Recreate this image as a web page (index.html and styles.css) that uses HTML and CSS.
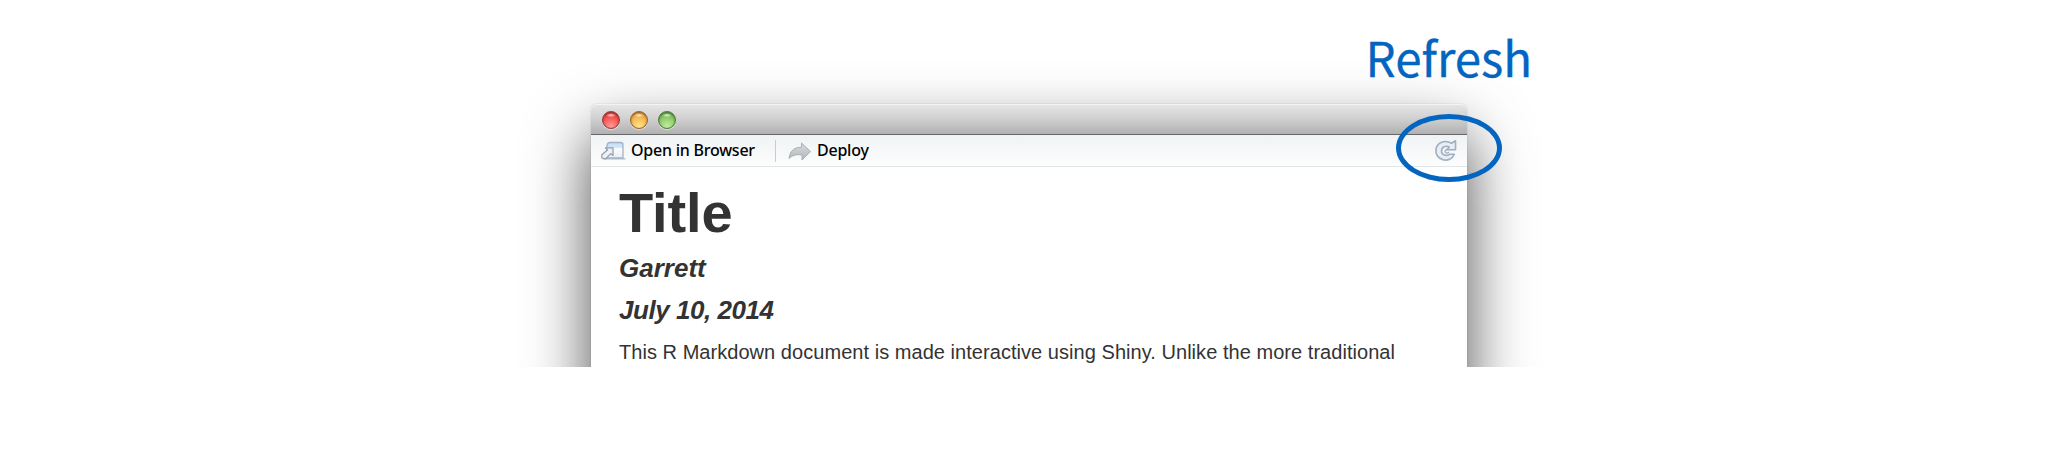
FILE: index.html
```html
<!DOCTYPE html>
<html lang="en">
<head>
<meta charset="utf-8">
<title>Title</title>
<link rel="stylesheet" href="styles.css">
</head>
<body>
<main class="figure">
  <section class="window">
    <header class="titlebar">
      <span class="light red"></span><span class="light amber"></span><span class="light green"></span>
    </header>
    <nav class="toolbar">
      <svg class="icon-open" viewBox="0 0 26 20" width="26" height="20">
        <defs><linearGradient id="pane" x1="0" y1="0" x2="0" y2="1"><stop offset="0" stop-color="#c5dff6"/><stop offset=".3" stop-color="#cfe4f7"/><stop offset=".4" stop-color="#fafcfe"/><stop offset="1" stop-color="#e9edf5"/></linearGradient></defs>
        <path d="M3 17.800H25.500" stroke="#c3c9d0" stroke-width="1.600"/>
        <path d="M7 4.500Q7.300 1.500 10 1.500H20.500Q23 1.500 23 4V17H7Z" fill="url(#pane)" stroke="#a3b1c6" stroke-width="1.300"/>
        <path d="M5.500 6.800H13V14.500L10.800 12.600L5.600 17.800L1.800 17V13.800L7.500 9Z" fill="#edf0f4" stroke="#929dab" stroke-width="1.200" stroke-linejoin="round"/>
      </svg>
      <span class="label open">Open in Browser</span>
      <i class="divider"></i>
      <svg class="icon-deploy" viewBox="0 0 24 20" width="24" height="20">
        <defs><linearGradient id="arrow" x1="0" y1="0" x2="0" y2="1"><stop offset="0" stop-color="#d9dcdf"/><stop offset="1" stop-color="#b2b7bb"/></linearGradient></defs>
        <path d="M1 17.500C2 9 7 6.300 13.500 6.300V2L22.500 10.500L14 19V14C8 13 4 14.500 1 17.500Z" fill="url(#arrow)" stroke="#a9afb4" stroke-width="1" stroke-linejoin="round"/>
      </svg>
      <span class="label deploy">Deploy</span>
      <svg class="icon-refresh" viewBox="0 0 24 24" width="24" height="24">
        <path d="M17.500 4.300L21.500 1.800V10.800H12.700L15.300 8.200C12 6 7.500 8 7.500 12C7.500 16.300 12.500 17.500 15.500 15.300H20.300C18.500 20 13.500 22 9 20.700C4 19.200 1.200 15 2 10.300C3 3.500 11 .3 17.500 4.300Z" fill="#e6eefa" stroke="#a2adbf" stroke-width="1.600" stroke-linejoin="round"/>
        <path d="M13.500 10.800C11.500 10.300 10.300 12.300 11.500 13.600C12.300 14.500 13.800 14.200 15 13" fill="none" stroke="#a2adbf" stroke-width="1.300"/>
      </svg>
    </nav>
    <article class="document">
      <h1>Title</h1>
      <h4 class="author">Garrett</h4>
      <h4 class="date">July 10, 2014</h4>
      <p>This R Markdown document is made interactive using Shiny. Unlike the more traditional</p>
    </article>
  </section>
  <div class="callout">Refresh</div>
  <div class="ring"></div>
</main>
</body>
</html>
```
FILE: styles.css
```css
* { box-sizing: border-box; }
body { margin: 0; background: #fff; font-family: "Liberation Sans", Arial, sans-serif; }
.figure { position: relative; height: 367px; padding: 104px 0 0 591px; overflow: hidden; }
.window {
  width: 876px; height: 600px; background: #fff; border-radius: 6px 6px 0 0;
  box-shadow: 0 0 1px rgba(0,0,0,.45), 0 31px 63px rgba(0,0,0,.7);
}
.titlebar {
  display: flex; gap: 10px; height: 31px; padding: 6.5px 0 0 11px;
  border-radius: 6px 6px 0 0; border-bottom: 1px solid #686868;
  background: linear-gradient(#e6e6e6, #d2d2d2 45%, #b1b1b1);
  box-shadow: inset 0 1px #f4f4f4;
}
.light { width: 18px; height: 18px; border-radius: 50%; border: 1px solid; box-shadow: 0 1px 1px rgba(255,255,255,.6), inset 0 1px 2px rgba(0,0,0,.4); }
.red { border-color: #943a3a; background: radial-gradient(ellipse 5px 2px at 50% 20%, #fffc, transparent), radial-gradient(circle at 50% 90%, #ff9c94, #f4504d 60%, #d83838); }
.amber { border-color: #966329; background: radial-gradient(ellipse 5px 2px at 50% 20%, #fffc, transparent), radial-gradient(circle at 50% 90%, #ffe68a, #f4b44b 60%, #dc8b2c); }
.green { border-color: #4c7934; background: radial-gradient(ellipse 5px 2px at 50% 20%, #fffc, transparent), radial-gradient(circle at 50% 90%, #c5eda0, #86c765 60%, #5da143); }
.toolbar {
  display: flex; align-items: center; height: 32px; padding-left: 9px;
  background: linear-gradient(#f0f3f4, #fcfdfd); border-bottom: 1px solid #e3e6e7;
}
.label { padding-bottom: 1px; font: 500 16px/24px "Noto Sans", "Open Sans", sans-serif; color: #000; white-space: nowrap; }
.open { width: 128px; margin-left: 5px; letter-spacing: -.23px; }
.divider { width: 1px; height: 22px; margin-left: 16px; background: #c8cccd; }
.icon-deploy { margin-left: 12px; }
.deploy { margin-left: 5px; letter-spacing: -.23px; }
.icon-refresh { margin: 0 9px 0 auto; }
.document { padding: 13px 0 0 28px; color: #333; white-space: nowrap; }
h1, h4, p { margin: 0; }
h1 { font-size: 56px; line-height: 66px; letter-spacing: -.1px; }
h4 { font-size: 26px; line-height: 42px; font-style: italic; }
.author { margin-top: 1px; }
.date { letter-spacing: -.45px; }
p { font-size: 20px; line-height: 42px; letter-spacing: .045px; }
.callout { position: absolute; left: 1365.5px; top: 22px; font: 400 47.5px/70px "Noto Sans CJK SC", sans-serif; color: #0465c0; -webkit-text-stroke: .3px #0465c0; }
.ring { position: absolute; left: 1396px; top: 114px; width: 106px; height: 68px; border: 5px solid #0465c0; border-radius: 50%; }
```
